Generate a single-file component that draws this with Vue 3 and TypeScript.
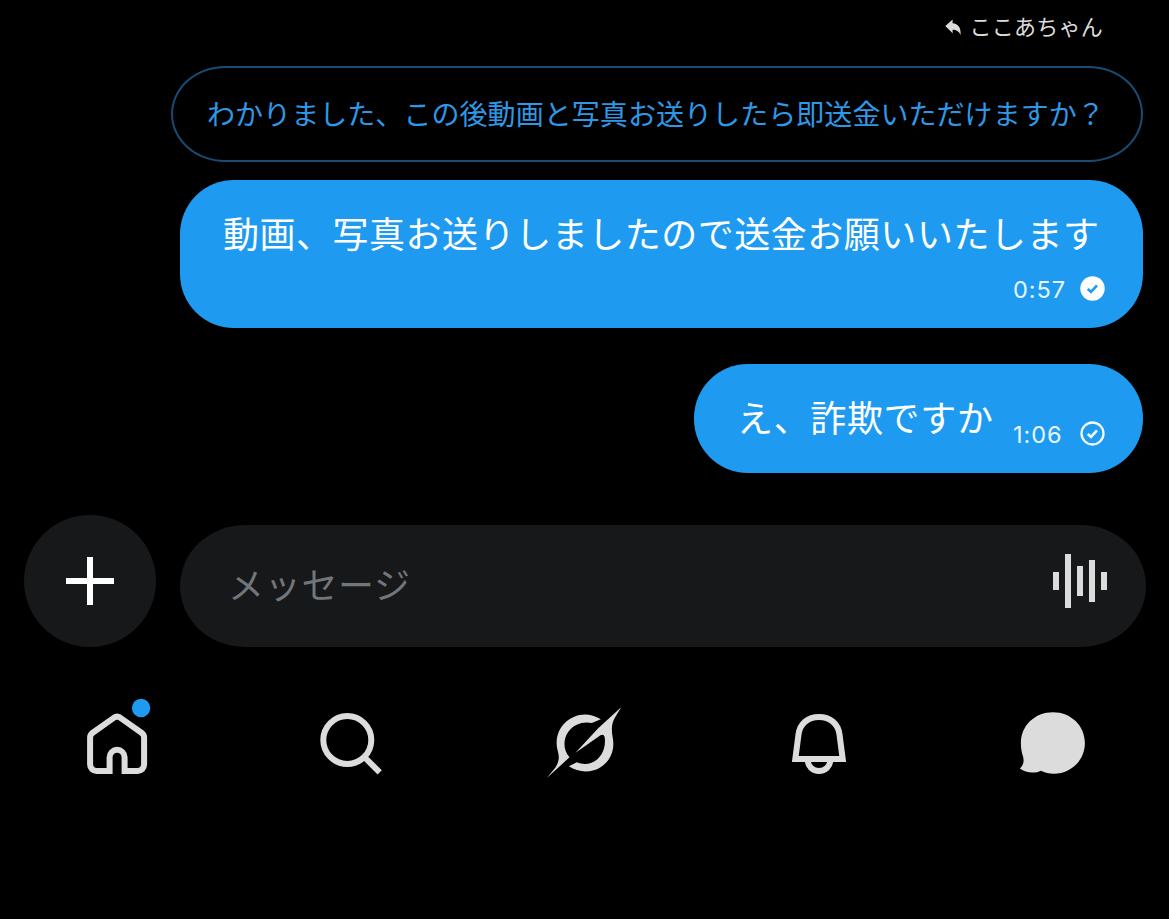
<script setup lang="ts">
interface Message {
  text: string
  time: string
  read: boolean
  inline: boolean
}

const replyTo = 'ここあちゃん'
const quoted = 'わかりました、この後動画と写真お送りしたら即送金いただけますか？'
const messages: Message[] = [
  { text: '動画、写真お送りしましたので送金お願いいたします', time: '0:57', read: true, inline: false },
  { text: 'え、詐欺ですか', time: '1:06', read: false, inline: true },
]
const bars: number[] = [18, 54, 30, 42, 18]
</script>

<template>
  <div class="screen">
    <main class="thread">
      <div class="reply-label">
        <svg class="reply-icon" width="17" height="18" viewBox="0 0 17 18">
          <path d="M0.3 7 7.600 0.400V4.200C13 4.500 16.200 8.500 15.600 16 13.800 12.300 11.500 10.800 7.600 10.800V14.200Z" />
        </svg>
        <span>{{ replyTo }}</span>
      </div>
      <div class="quote">{{ quoted }}</div>
      <div v-for="m in messages" :key="m.time" class="bubble" :class="{ inline: m.inline }">
        <p class="text">{{ m.text }}</p>
        <div class="meta">
          <span class="time">{{ m.time }}</span>
          <svg class="check" width="25" height="25" viewBox="-12.5 -12.5 25 25">
            <circle v-if="m.read" r="12.2" fill="#fff" />
            <circle v-else r="11" fill="none" stroke="#f0faff" stroke-width="2.3" />
            <path d="M-4.7 0.4-1.5 3.4 4.5-3.1" fill="none" :stroke="m.read ? '#1e9bf1' : '#f0faff'" stroke-width="2.7" />
          </svg>
        </div>
      </div>
    </main>

    <section class="composer">
      <button class="add" aria-label="追加">
        <svg width="48" height="48" viewBox="0 0 48 48"><path d="M24 0V48M0 24H48" stroke="#fff" stroke-width="6" /></svg>
      </button>
      <div class="field">
        <span class="placeholder">メッセージ</span>
        <div class="wave">
          <i v-for="(h, i) in bars" :key="i" :style="{ height: h + 'px' }"></i>
        </div>
      </div>
    </section>

    <nav class="tabs">
      <a class="tab">
        <svg viewBox="-3.1 10 100 100">
          <path class="line" d="M26.500 86H39.500V72.300a7.500 7.500 0 0 1 15 0V86H67.500a6.500 6.500 0 0 0 6.500-6.500V52.500q0-3-2.600-4.800L50 32.600q-3-2-6 0L22.600 47.700Q20 49.500 20 52.500V79.500a6.500 6.500 0 0 0 6.500 6.500Z" />
          <circle cx="71" cy="23" r="9.200" fill="#1e9bf1" />
        </svg>
      </a>
      <a class="tab">
        <svg viewBox="0.7 0 100 100">
          <circle class="line" cx="47" cy="45" r="24" />
          <path class="line" d="M64 62 79.400 77.400" />
        </svg>
      </a>
      <a class="tab">
        <svg viewBox="-2.5 0 300 300">
          <path class="solid" d="M198 73C172 56 142 55 118 65 76 83 58 124 68 165 74 185 74 200 60 220L36 249 104 187C85 165 84 135 100 111 115 88 145 78 171 84Z" />
          <path class="solid" d="M259 37 190 100 122 173 197 121C205 117 209 120 210 130 213 162 199 191 170 203 155 209 140 207 126 202L102 214C130 232 165 235 195 218 228 198 240 165 234 130 229 105 230 85 240 68Z" />
        </svg>
      </a>
      <a class="tab">
        <svg viewBox="-2 0 100 100">
          <path class="line" d="M25.300 64.100 28.500 39.500C29.900 28.500 38 22 49 22S68.100 28.500 69.500 39.500L72.700 64.100Z" />
          <path class="line" d="M37.700 65a11.300 11.100 0 0 0 22.600 0" />
        </svg>
      </a>
      <a class="tab">
        <svg viewBox="-2.9 0 100 100">
          <path class="solid" d="M48 17.200C66 17.200 80 30.500 80 48S66 78.700 49 78.700C44 78.700 40 77.500 36 75.700 31 78.500 21 78.500 15 73.500 18.500 70.500 19.500 66 18 61 16.500 57 16 52 16 48 16 30.500 30 17.200 48 17.200Z" />
        </svg>
      </a>
    </nav>
  </div>
</template>

<style>
html,
body {
  background: #000;
}
</style>

<style scoped>
.screen {
  box-sizing: border-box;
  width: 1169px;
  height: 919px;
  overflow: hidden;
  background: #000;
  font-family: 'Noto Sans CJK JP', sans-serif;
  display: flex;
  flex-direction: column;
}
.thread {
  height: 515px;
  padding-right: 26px;
  display: flex;
  flex-direction: column;
  align-items: flex-end;
}
.reply-label {
  height: 66px;
  box-sizing: border-box;
  padding: 10px 40px 0 0;
  display: flex;
  gap: 7px;
  color: #dcdcdc;
  font-size: 22px;
  line-height: 30px;
  letter-spacing: 0.25px;
  white-space: nowrap;
}
.reply-icon {
  margin-top: 9px;
  fill: #dcdcdc;
}
.quote {
  box-sizing: border-box;
  width: 972px;
  height: 96px;
  padding-left: 34px;
  border: 2px solid #184c74;
  border-radius: 54px / 48px;
  color: #2e98e6;
  font-size: 28px;
  line-height: 90px;
  letter-spacing: 0.06px;
  white-space: nowrap;
}
.bubble {
  box-sizing: border-box;
  width: 963px;
  height: 147.5px;
  margin-top: 18px;
  padding: 26px 38px 0 43px;
  border-radius: 54px;
  background: #1e9bf1;
  color: #fff;
  display: flex;
  flex-direction: column;
}
.text {
  margin: 0;
  font-size: 36px;
  line-height: 52px;
  letter-spacing: 0.52px;
  white-space: nowrap;
}
.meta {
  display: flex;
  align-items: center;
  justify-content: space-between;
  align-self: flex-end;
  width: 92px;
  height: 25px;
  margin-top: 18px;
}
.time {
  padding-top: 1px;
  font-family: Inter, sans-serif;
  font-size: 23.5px;
  line-height: 25px;
  letter-spacing: 0.95px;
  color: #e6f5ff;
}
.bubble.inline {
  width: 449px;
  height: 108.5px;
  margin-top: 36.5px;
  flex-direction: row;
  justify-content: space-between;
}
.inline .text {
  letter-spacing: 0.65px;
}
.inline .meta {
  align-self: flex-start;
  margin-top: 31px;
}
.composer {
  height: 132px;
  padding: 0 23px 0 24px;
  display: flex;
  align-items: flex-end;
  gap: 24px;
}
.add {
  width: 132px;
  height: 132px;
  padding: 0;
  border: 0;
  border-radius: 50%;
  background: #16181a;
  display: flex;
  align-items: center;
  justify-content: center;
}
.field {
  box-sizing: border-box;
  flex: 1;
  height: 122px;
  padding: 0 39px 10px 48px;
  border-radius: 65px / 61px;
  background: #16181a;
  display: flex;
  align-items: center;
  justify-content: space-between;
}
.placeholder {
  margin-top: 3px;
  color: #71767b;
  font-size: 36px;
  line-height: 52px;
  letter-spacing: 0.7px;
}
.wave {
  display: flex;
  align-items: center;
  gap: 6px;
}
.wave i {
  width: 6px;
  background: #dcdcdc;
}
.tabs {
  display: grid;
  grid-template-columns: repeat(5, 1fr);
  margin-top: 48px;
}
.tab {
  display: flex;
  justify-content: center;
}
.tab svg {
  width: 100px;
  height: 100px;
}
.line {
  fill: none;
  stroke: #dcdcdc;
  stroke-width: 6;
}
.solid {
  fill: #dcdcdc;
}
</style>
